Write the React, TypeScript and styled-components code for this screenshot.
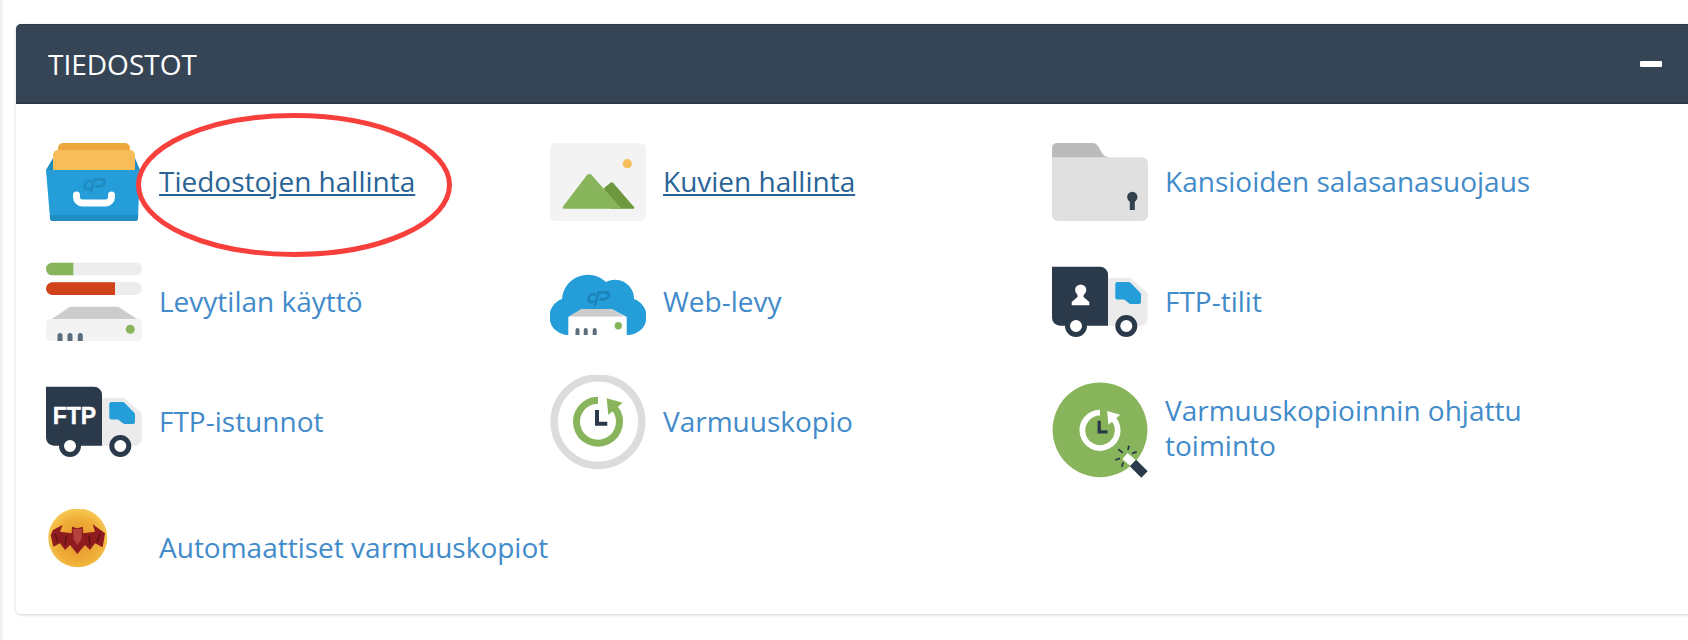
import React from 'react';
import styled, { createGlobalStyle } from 'styled-components';

const GlobalStyle = createGlobalStyle`
    html, body {
        margin: 0;
        padding: 0;
        background: #fff;
    }
    body {
        font-family: 'Open Sans', 'Liberation Sans', sans-serif;
    }
`

const Page = styled.div`
    width: 1688px;
    height: 640px;
    box-sizing: border-box;
    padding: 24px 0 0 16px;
    overflow: hidden;
    box-shadow: inset 3px 0 3px -1px #eee;
`

const Panel = styled.section`
    position: relative;
    width: 1692px;
    background: #fff;
    border-radius: 5px;
    box-shadow: 0 1px 3px rgba(0, 0, 0, 0.18);
`

const PanelHeader = styled.header`
    height: 80px;
    box-sizing: border-box;
    padding: 0 46px 0 32px;
    display: flex;
    align-items: center;
    justify-content: space-between;
    background: #354556;
    border-top: 1px solid #2c3a48;
    border-bottom: 2px solid #2c3a48;
    border-radius: 5px 5px 0 0;
`

const PanelTitle = styled.h2`
    margin: 0;
    color: #fff;
    font-size: 28px;
    font-weight: 400;
    line-height: 1;
`

const CollapseBar = styled.span`
    display: block;
    width: 22px;
    height: 6px;
    border-radius: 1px;
    background: #fff;
`

const FeatureGrid = styled.div`
    display: grid;
    grid-template-columns: 504px 502px 502px;
    align-items: start;
    row-gap: 24px;
    padding: 31px 0 25px 30px;
`

const Feature = styled.div`
    display: flex;
    align-items: center;
    gap: 17px;
`

const FeatureLink = styled.a<{ $active?: boolean }>`
    max-width: 400px;
    padding-bottom: 4px;
    color: ${(p) => (p.$active ? '#2a6496' : '#428bca')};
    font-size: 28px;
    line-height: 35px;
    text-decoration: ${(p) => (p.$active ? 'underline' : 'none')};
`

const Highlight = styled.svg`
    position: absolute;
    left: 120px;
    top: 89px;
    width: 316px;
    height: 144px;
    pointer-events: none;
`

const Icon = styled.svg`
    display: block;
    flex: none;
    width: 96px;
`

const BlurredIcon = styled(Icon)`
    filter: blur(0.6px);
`

const CpMark = ({ x, y, color }: { x: number; y: number; color: string }) => (
    <g transform={`translate(${x} ${y}) skewX(-16)`} fill="none" stroke={color} strokeWidth="2.8">
        <path d="M-3 -3.6 H-6 a3.2 3.2 0 0 0 -3.2 3.2 V0.6 a3.2 3.2 0 0 0 3.2 3.2 H-3" />
        <path d="M-1 7.5 V-5.6 H6.5 a3.5 3.5 0 0 1 0 7 H2" />
    </g>
)

const RestoreClock = ({ x, y, scale = 1, ring, hands }: { x: number; y: number; scale?: number; ring: string; hands: string }) => (
    <g transform={`translate(${x} ${y}) scale(${scale})`}>
        <path d="M0 -21.5 A21.5 21.5 0 1 0 16.5 -13.8" fill="none" stroke={ring} strokeWidth="7" />
        <path d="M8.7 -23.4 L24.7 -19 L10.3 -6.7 Z" fill={ring} />
        <path d="M-1 -11.7 V2 H9.3" fill="none" stroke={hands} strokeWidth="4" />
    </g>
)

const Truck = ({ children }: { children: React.ReactNode }) => (
    <Icon viewBox="0 0 96 96" height="96">
        <path d="M56 22.7 H78 L95.7 38 V64 a6.7 6.7 0 0 1 -6.7 6.7 H56 Z" fill="#ebebeb" />
        <path d="M63.3 29 a2 2 0 0 1 2 -2 H76.5 a3 3 0 0 1 2 .8 L88 37.5 a3 3 0 0 1 1 2.2 V47 a2 2 0 0 1 -2 2 H78 L72 44.5 H65.3 a2 2 0 0 1 -2 -2 Z" fill="#259dd8" />
        <path d="M0 11.7 H48 a8 8 0 0 1 8 8 V70.7 H8 a8 8 0 0 1 -8 -8 Z" fill="#2b3a4a" />
        {children}
        <circle cx="24" cy="71" r="8.5" fill="#fff" stroke="#2b3a4a" strokeWidth="5" />
        <circle cx="74.3" cy="71" r="8.5" fill="#fff" stroke="#2b3a4a" strokeWidth="5" />
    </Icon>
)

const FileManagerIcon = () => (
    <Icon viewBox="0 0 96 96" height="96">
        <path d="M12 13 a5 5 0 0 1 5 -5 H79 a5 5 0 0 1 5 5 V22 H12 Z" fill="#eea73c" />
        <path d="M0 35 L7 23 H89 L94 35 Z" fill="#1f8cc2" />
        <path d="M7 20 a5 5 0 0 1 5 -5 H84 a5 5 0 0 1 5 5 V36 H7 Z" fill="#f6bd58" />
        <path d="M0 35 H94 L92 83 a3 3 0 0 1 -3 3 H7 a3 3 0 0 1 -3 -3 Z" fill="#259dd8" />
        <path d="M92.2 80 L92 83 a3 3 0 0 1 -3 3 H7 a3 3 0 0 1 -3 -3 L3.8 80 Z" fill="#1f8cc2" />
        <CpMark x={48} y={50} color="#1f8cc2" />
        <path d="M30.5 60 V62 a6 6 0 0 0 6 6 H59.5 a6 6 0 0 0 6 -6 V60" fill="none" stroke="#fff" strokeWidth="7" strokeLinecap="round" />
    </Icon>
)

const ImagesIcon = () => (
    <Icon viewBox="0 0 96 96" height="96">
        <rect y="8" width="96" height="78" rx="6" fill="#f3f3f3" />
        <circle cx="77.3" cy="28.7" r="4.6" fill="#f6bd58" />
        <path d="M54 53 L60.5 47.8 a2 2 0 0 1 2.8 .3 L84 72 a1 1 0 0 1 -.8 1.7 H60 Z" fill="#6d983e" />
        <path d="M37 40 a3 3 0 0 1 4.6 0 L71.7 73.7 H14 a1.3 1.3 0 0 1 -1 -2.2 Z" fill="#88b55b" />
    </Icon>
)

const FolderLockIcon = () => (
    <Icon viewBox="0 0 96 96" height="96">
        <path d="M0 30 V13 a5 5 0 0 1 5 -5 H41 a6 6 0 0 1 5 3 L50 18 a8 8 0 0 0 6 4 V30 Z" fill="#bbb" />
        <path d="M0 22.3 H90 a6 6 0 0 1 6 6 V80 a6 6 0 0 1 -6 6 H6 a6 6 0 0 1 -6 -6 Z" fill="#e0e0e0" />
        <circle cx="80.3" cy="62" r="5.2" fill="#34414e" />
        <rect x="77.8" y="63" width="5" height="12" fill="#34414e" />
    </Icon>
)

const DiskUsageIcon = () => (
    <Icon viewBox="0 0 96 96" height="96">
        <rect y="7.7" width="96" height="12.6" rx="6.3" fill="#ececec" />
        <path d="M6.3 7.7 H27.3 V20.3 H6.3 a6.3 6.3 0 0 1 0 -12.6 Z" fill="#88b55b" />
        <rect y="27.3" width="96" height="12.6" rx="6.3" fill="#ececec" />
        <path d="M6.3 27.3 H69 V39.9 H6.3 a6.3 6.3 0 0 1 0 -12.6 Z" fill="#d0431a" />
        <path d="M24 51.7 H72.3 L91 64 H5.7 Z" fill="#ccc" />
        <path d="M5 64 H91 a5 5 0 0 1 5 5 V81 a5 5 0 0 1 -5 5 H5 a5 5 0 0 1 -5 -5 V69 a5 5 0 0 1 5 -5 Z" fill="#f3f3f3" />
        <circle cx="84.3" cy="74.3" r="4.5" fill="#88b55b" />
        <path d="M11.5 86 V80.5 a2.5 2.5 0 0 1 5 0 V86 Z M21.5 86 V80.5 a2.5 2.5 0 0 1 5 0 V86 Z M31.8 86 V80.5 a2.5 2.5 0 0 1 5 0 V86 Z" fill="#5a6d7e" />
    </Icon>
)

const WebDiskIcon = () => (
    <Icon viewBox="0 0 96 96" height="96">
        <path d="M18.5 80 A18.5 18.5 0 0 1 12 44 A26 26 0 0 1 56 27 A19 19 0 0 1 84 44 A18.5 18.5 0 0 1 77.5 80 Z" fill="#259dd8" />
        <CpMark x={48} y={43} color="#1c84b8" />
        <path d="M31.7 54 H61.7 L76.7 62 V80 H18.3 V62 Z" fill="#fff" />
        <path d="M31.7 54 H61.7 L74 61.5 H19 Z" fill="#ccc" />
        <circle cx="68.3" cy="70.7" r="3.7" fill="#88b55b" />
        <path d="M25.5 80 V75 a2 2 0 0 1 4 0 V80 Z M33.7 80 V75 a2 2 0 0 1 4 0 V80 Z M42.7 80 V75 a2 2 0 0 1 4 0 V80 Z" fill="#5a6d7e" />
    </Icon>
)

const BackupIcon = () => (
    <Icon viewBox="0 0 96 96" height="96">
        <circle cx="48" cy="46.7" r="43.8" fill="none" stroke="#dcdcdc" strokeWidth="7.4" />
        <RestoreClock x={48} y={46.7} ring="#88b55b" hands="#2b3a4a" />
    </Icon>
)

const BackupWizardIcon = () => (
    <Icon viewBox="0 0 96 110" height="110">
        <circle cx="48" cy="54.8" r="47.4" fill="#88b55b" />
        <RestoreClock x={48} y={55.3} scale={0.82} ring="#fff" hands="#2b3a4a" />
        <path d="M73 81 L81 88" stroke="#fff" strokeWidth="8" />
        <path d="M81 88 L92.5 99.5" stroke="#2b3a4a" strokeWidth="9" />
        <path d="M66.3 74.3 L70.7 77.7 M77 70.7 L76 75 M84.7 76.7 L80 78.7 M63.3 85 L68 83.3 M71.3 87.3 L69.7 91.7" stroke="#2b3a4a" strokeWidth="1.8" />
    </Icon>
)

const BatIcon = () => (
    <BlurredIcon viewBox="0 0 96 80" height="80">
        <defs>
            <radialGradient id="batCoin" cx="50%" cy="55%" r="55%">
                <stop offset="0%" stopColor="#e4902a" />
                <stop offset="70%" stopColor="#efaf38" />
                <stop offset="100%" stopColor="#f7cb55" />
            </radialGradient>
        </defs>
        <circle cx="31.8" cy="28.8" r="29.5" fill="url(#batCoin)" />
        <path
            d="M16.7 16 L7 21 L4.7 26 L7.3 37.7 L14 34.3 L19 41 L24 36 L31.3 45 L39 36 L44 41 L49 34.3 L56.7 38.3 L59 24.3 L46.7 15.3 L49 22.7 L37.3 24.3 L36.7 17.7 L31.3 19.3 L26 17.7 L25.7 24.3 L14 22.7 Z"
            fill="#8e1c1e"
        />
        <path d="M9 25 L12 33 M54 25 L51 33 M20 27 L19 36 M43 27 L44 36" stroke="#5d1012" strokeWidth="1.4" />
        <path d="M27 20 L36 20 L35.5 30 L31.5 36 L27.5 30 Z" fill="#b4423c" />
    </BlurredIcon>
)

const features: { label: string; icon: React.ReactNode; active?: boolean }[] = [
    { label: 'Tiedostojen hallinta', icon: <FileManagerIcon />, active: true },
    { label: 'Kuvien hallinta', icon: <ImagesIcon />, active: true },
    { label: 'Kansioiden salasanasuojaus', icon: <FolderLockIcon /> },
    { label: 'Levytilan käyttö', icon: <DiskUsageIcon /> },
    { label: 'Web-levy', icon: <WebDiskIcon /> },
    {
        label: 'FTP-tilit',
        icon: (
            <Truck>
                <circle cx="28.7" cy="35" r="5.6" fill="#fff" />
                <path d="M25.5 37 H32 L31.5 42 L37.3 47 V50.3 H19.7 V47 L25.5 42 Z" fill="#fff" />
            </Truck>
        ),
    },
    {
        label: 'FTP-istunnot',
        icon: (
            <Truck>
                <text x="6.7" y="49" fill="#fff" stroke="#fff" strokeWidth="0.4" fontFamily="'Liberation Sans', sans-serif" fontWeight="700" fontSize="24" textLength="43.5" lengthAdjust="spacingAndGlyphs">FTP</text>
            </Truck>
        ),
    },
    { label: 'Varmuuskopio', icon: <BackupIcon /> },
    { label: 'Varmuuskopioinnin ohjattu toiminto', icon: <BackupWizardIcon /> },
    { label: 'Automaattiset varmuuskopiot', icon: <BatIcon /> },
]

function App() {
    return (
        <Page>
            <GlobalStyle />
            <Panel>
                <PanelHeader>
                    <PanelTitle>TIEDOSTOT</PanelTitle>
                    <CollapseBar />
                </PanelHeader>
                <FeatureGrid>
                    {features.map((f) => (
                        <Feature key={f.label}>
                            {f.icon}
                            <FeatureLink href="#" $active={f.active}>{f.label}</FeatureLink>
                        </Feature>
                    ))}
                </FeatureGrid>
                <Highlight viewBox="0 0 316 144">
                    <ellipse cx="158" cy="72" rx="155.5" ry="69.5" fill="none" stroke="#f73f3b" strokeWidth="5" />
                </Highlight>
            </Panel>
        </Page>
    );
}
export default App;
